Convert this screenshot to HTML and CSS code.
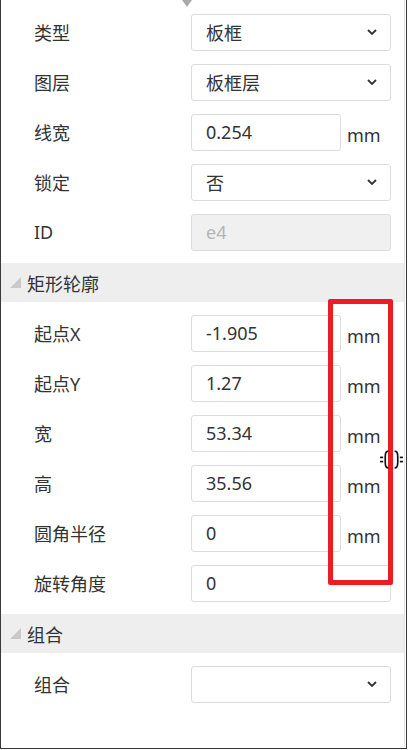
FILE: index.html
```html
<!DOCTYPE html>
<html lang="zh-CN">
<head>
    <meta charset="UTF-8">
    <meta name="viewport" content="width=device-width, initial-scale=1.0">
    <title>属性面板</title>
    <link rel="stylesheet" href="styles.css">
</head>
<body>
    <div class="panel">
        <div class="pointer"></div>
        <div class="scroll">
            <div class="section-body">
                <div class="row">
                    <div class="label">类型</div>
                    <div class="field select">板框
                        <svg class="chevron" viewBox="0 0 10 6"><polyline points="1,1 5,5 9,1"/></svg>
                    </div>
                </div>
                <div class="row">
                    <div class="label">图层</div>
                    <div class="field select">板框层
                        <svg class="chevron" viewBox="0 0 10 6"><polyline points="1,1 5,5 9,1"/></svg>
                    </div>
                </div>
                <div class="row">
                    <div class="label">线宽</div>
                    <div class="field short">0.254</div>
                    <div class="unit">mm</div>
                </div>
                <div class="row">
                    <div class="label">锁定</div>
                    <div class="field select">否
                        <svg class="chevron" viewBox="0 0 10 6"><polyline points="1,1 5,5 9,1"/></svg>
                    </div>
                </div>
                <div class="row">
                    <div class="label">ID</div>
                    <div class="field disabled">e4</div>
                </div>
            </div>

            <div class="section-head"><span class="arrow"></span>矩形轮廓</div>
            <div class="section-body">
                <div class="row">
                    <div class="label">起点X</div>
                    <div class="field short">-1.905</div>
                    <div class="unit">mm</div>
                </div>
                <div class="row">
                    <div class="label">起点Y</div>
                    <div class="field short">1.27</div>
                    <div class="unit">mm</div>
                </div>
                <div class="row">
                    <div class="label">宽</div>
                    <div class="field short">53.34</div>
                    <div class="unit">mm</div>
                </div>
                <div class="row">
                    <div class="label">高</div>
                    <div class="field short">35.56</div>
                    <div class="unit">mm</div>
                </div>
                <div class="row">
                    <div class="label">圆角半径</div>
                    <div class="field short">0</div>
                    <div class="unit">mm</div>
                </div>
                <div class="row">
                    <div class="label">旋转角度</div>
                    <div class="field">0</div>
                </div>
            </div>

            <div class="section-head"><span class="arrow"></span>组合</div>
            <div class="section-body">
                <div class="row">
                    <div class="label">组合</div>
                    <div class="field select">
                        <svg class="chevron" viewBox="0 0 10 6"><polyline points="1,1 5,5 9,1"/></svg>
                    </div>
                </div>
            </div>
        </div>

        <!-- annotation box drawn over the unit column -->
        <div class="highlight"></div>
        <svg class="cursor" viewBox="0 0 24 24">
            <path d="M9 4 C6 4 6 7 6 9 L6 15 C6 17 6 20 9 20" />
            <path d="M15 4 C18 4 18 7 18 9 L18 15 C18 17 18 20 15 20" />
            <line x1="1" y1="10" x2="4" y2="10" />
            <line x1="1" y1="14" x2="4" y2="14" />
            <line x1="20" y1="10" x2="23" y2="10" />
            <line x1="20" y1="14" x2="23" y2="14" />
        </svg>
    </div>
</body>
</html>
```

FILE: styles.css
```css
body {
    margin: 0;
    background-color: #fff;
    font-family: "Noto Sans", "Noto Sans CJK SC", sans-serif;
    font-size: 18px;
    color: #333;
}

.panel {
    position: relative;
    width: 404px;
    height: 748px;
    border: 1px solid #3a3a3a;
    border-top: none;
    padding-right: 1px;
    overflow: hidden;
}

.pointer {
    position: absolute;
    top: 0;
    left: 181px;
    width: 0;
    height: 0;
    border-left: 5px solid transparent;
    border-right: 5px solid transparent;
    border-top: 7px solid #aaa;
}

.scroll {
    height: 100%;
    border-right: 1px solid #e2e2e2;
}

.section-body {
    display: flex;
    flex-direction: column;
    gap: 14px;
    padding: 14px 0 13px;
}

.section-body + .section-head + .section-body {
    padding-top: 13px;
}

.row {
    display: flex;
    align-items: center;
    height: 36px;
}

.label {
    width: 190px;
    padding-left: 33px;
    box-sizing: border-box;
    flex-shrink: 0;
}

.field {
    display: flex;
    align-items: center;
    box-sizing: border-box;
    width: 200px;
    height: 37px;
    padding: 0 13px 0 14px;
    border: 1px solid #ddd;
    border-radius: 3px;
    background-color: #fff;
}

.field.short {
    width: 150px;
}

.field.disabled {
    background-color: #f0f0f0;
    color: #b5b5b5;
}

.chevron {
    width: 10px;
    height: 6px;
    margin-left: auto;
    fill: none;
    stroke: #333;
    stroke-width: 1.8;
}

.unit {
    padding: 6px 0 0 6px;
}

.section-head {
    display: flex;
    align-items: center;
    height: 39px;
    background-color: #eee;
}

.arrow {
    width: 0;
    height: 0;
    margin: 0 6px 0 9px;
    border-left: 11px solid transparent;
    border-bottom: 11px solid #c9c9c9;
}

.highlight {
    position: absolute;
    left: 327px;
    top: 299px;
    width: 55px;
    height: 276px;
    border: 5px solid #ec1c24;
    border-radius: 2px;
}

.cursor {
    position: absolute;
    left: 378px;
    top: 447px;
    width: 25px;
    height: 25px;
    fill: none;
    stroke: #111;
    stroke-width: 1.6;
}
```
